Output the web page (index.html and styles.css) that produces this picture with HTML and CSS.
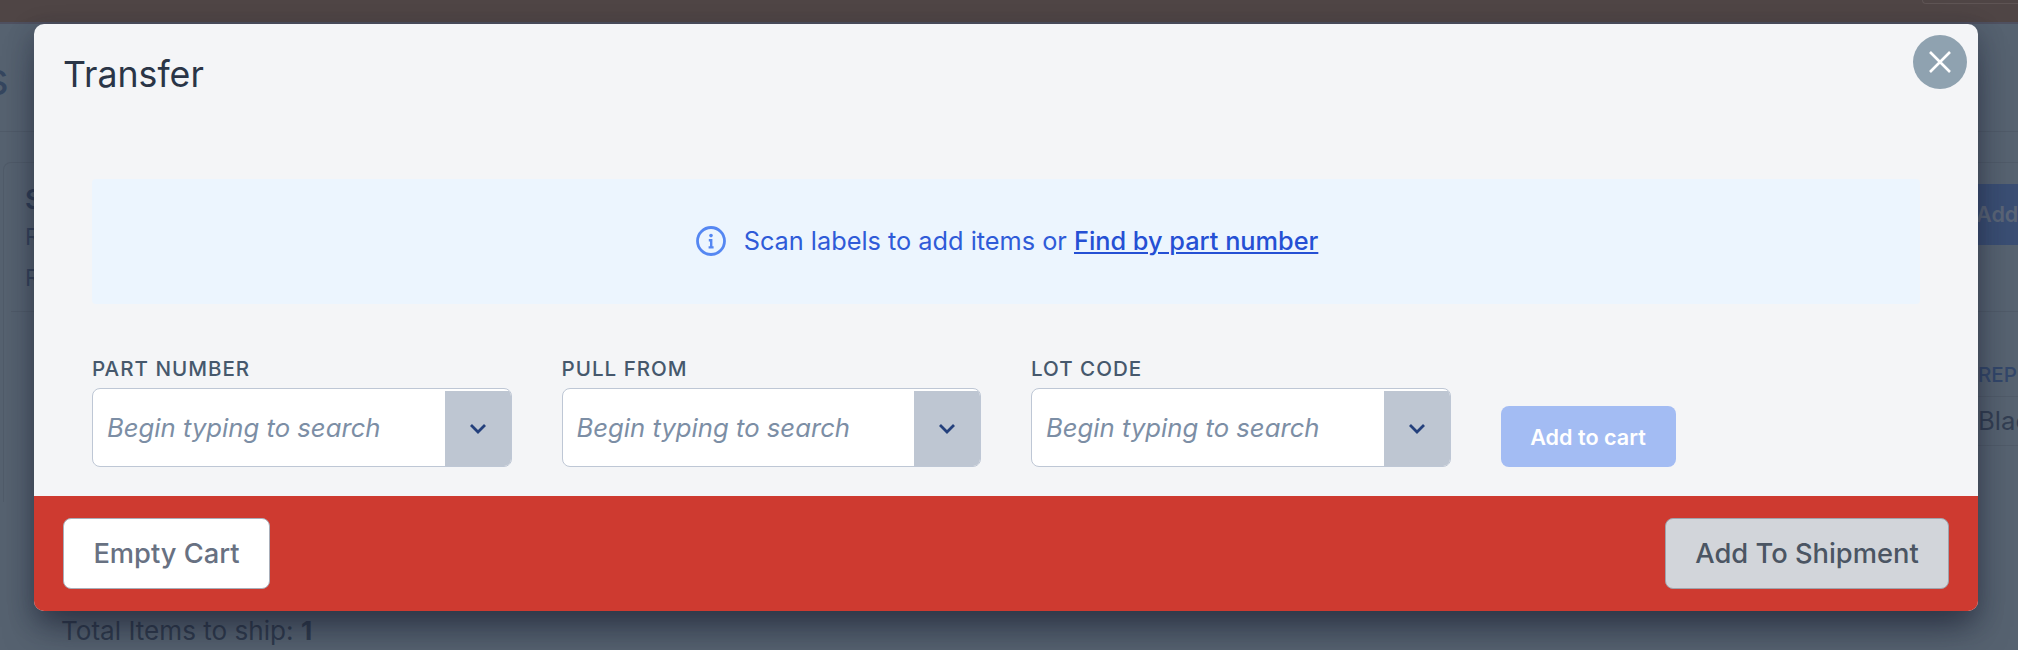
FILE: index.html
```html
<!DOCTYPE html>
<html lang="en">
<head>
<meta charset="utf-8">
<title>Transfer</title>
<link rel="stylesheet" href="styles.css">
</head>
<body>
<div class="page">
  <div class="topbar"><div class="topbar-box"></div></div>
  <div class="under">
    <div class="under-left">
      <div class="under-title">s</div>
      <div class="under-line"></div>
      <div class="under-card">
        <div class="under-rows">
          <div class="under-card-head">S</div>
          <div class="under-card-line">R</div>
          <div class="under-card-line">R</div>
        </div>
        <div class="under-total">Total Items to ship: <b>1</b></div>
      </div>
    </div>
    <div class="under-right">
      <div class="under-line under-line-right"></div>
      <div class="under-line under-line-second"></div>
      <div class="under-add">Add</div>
      <div class="under-line under-line-third"></div>
      <div class="under-th">REP</div>
      <div class="under-td">Black</div>
    </div>
  </div>
</div>
<section class="modal">
  <button class="close" aria-label="Close">
    <svg width="24" height="24" viewBox="0 0 24 24" fill="none" stroke="#fff" stroke-width="2.6"><path d="M2 2l20 20M22 2L2 22"/></svg>
  </button>
  <div class="modal-body">
    <h2 class="modal-title">Transfer</h2>
    <div class="notice">
      <svg class="notice-icon" width="30" height="30" viewBox="0 0 30 30" fill="none"><circle cx="15" cy="15" r="13.5" stroke="#5587f2" stroke-width="2.8"/><circle cx="15" cy="9.6" r="1.8" fill="#5587f2"/><path d="M12.8 14.2h2.4v6.8M12.6 21.4h5" stroke="#5587f2" stroke-width="2.4"/></svg>
      <span>Scan labels to add items or <a href="#">Find by part number</a></span>
    </div>
    <div class="fields">
      <div class="field">
        <label>Part Number</label>
        <div class="combo"><span class="combo-text">Begin typing to search</span><span class="combo-arrow"><svg width="18" height="12" viewBox="0 0 18 12" fill="none" stroke="#24407c" stroke-width="2.8"><path d="M2 2l7 7 7-7"/></svg></span></div>
      </div>
      <div class="field">
        <label>Pull From</label>
        <div class="combo"><span class="combo-text">Begin typing to search</span><span class="combo-arrow"><svg width="18" height="12" viewBox="0 0 18 12" fill="none" stroke="#24407c" stroke-width="2.8"><path d="M2 2l7 7 7-7"/></svg></span></div>
      </div>
      <div class="field">
        <label>Lot Code</label>
        <div class="combo"><span class="combo-text">Begin typing to search</span><span class="combo-arrow"><svg width="18" height="12" viewBox="0 0 18 12" fill="none" stroke="#24407c" stroke-width="2.8"><path d="M2 2l7 7 7-7"/></svg></span></div>
      </div>
      <button class="add-cart">Add to cart</button>
    </div>
  </div>
  <footer class="modal-foot">
    <button class="btn btn-white">Empty Cart</button>
    <button class="btn btn-grey">Add To Shipment</button>
  </footer>
</section>
</body>
</html>
```
FILE: styles.css
```css
* { box-sizing: border-box; }
html, body { margin: 0; height: 100%; }
body { width: 2018px; height: 650px; overflow: hidden; background: #566270; font-family: Inter, "Liberation Sans", sans-serif; color: #2f3a4c; }

.page { display: flex; flex-direction: column; height: 650px; }
.topbar { height: 22px; background: #4f4545; flex: none; display: flex; justify-content: flex-end; }
.topbar-box { width: 96px; height: 4px; border-left: 1px solid #5e5454; border-bottom: 1px solid #5e5454; border-bottom-left-radius: 6px; }
.under { flex: 1; display: flex; justify-content: space-between; border-top: 2px solid #4e5060; }
.under-left { width: 420px; }
.under-title { font-size: 45px; line-height: 50px; color: #35465f; margin-top: 30px; margin-left: -15px; }
.under-line { height: 1px; background: #505b69; }
.under-left .under-line { margin-top: 27px; }
.under-card { margin-top: 30px; margin-left: 3px; width: 400px; height: 340px; border-top: 1px solid #505b69; border-left: 1px solid #505b69; border-top-left-radius: 8px; }
.under-rows { margin-left: 7px; height: 149px; padding-top: 20px; border-bottom: 1px solid #505b69; }
.under-card-head { margin-left: 14px; font-weight: 600; font-size: 27px; line-height: 34px; color: #2f3d55; }
.under-card-line { margin-left: 14px; font-size: 23px; line-height: 41px; color: #35425a; }
.under-total { margin-top: 303px; margin-left: 57px; font-size: 26.1px; line-height: 32px; white-space: nowrap; color: #2f3a4c; }
.under-total b { font-weight: 700; }
.under-right { width: 42px; overflow: hidden; }
.under-line-right { margin-top: 107px; }
.under-line-second { margin-top: 30px; }
.under-add { margin-top: 21px; height: 61px; background: #3a4e73; color: #5a6577; font-weight: 600; font-size: 21.6px; line-height: 61px; white-space: nowrap; }
.under-line-third { margin-top: 66px; }
.under-th { margin-top: 42px; padding-left: 2px; font-size: 20.6px; font-weight: 500; line-height: 42px; color: #33476a; border-bottom: 1px solid #505b69; }
.under-td { padding-left: 2px; font-size: 25.7px; line-height: 48px; color: #323e52; white-space: nowrap; border-bottom: 1px solid #505b69; }

.modal { position: absolute; left: 34px; top: 24px; width: 1944px; height: 587px; background: #f4f5f7; border-radius: 10px; display: flex; flex-direction: column; box-shadow: 0 24px 36px -8px rgba(22,28,46,.5), 0 8px 24px 2px rgba(22,28,46,.3); }
.close { position: absolute; right: 11px; top: 11px; width: 54px; height: 54px; border: 0; border-radius: 50%; padding: 0; background: #8fa2b0; display: flex; align-items: center; justify-content: center; }
.modal-body { flex: 1; padding: 27px 58px 0; }
.modal-title { margin: 0 0 0 -29px; font-size: 35.7px; line-height: 46px; font-weight: 400; color: #2a3547; }
.notice { margin-top: 82px; height: 125px; padding: 0 0 2px 2px; border-radius: 4px; background: #ecf5fe; display: flex; align-items: center; justify-content: center; gap: 18px; font-size: 25.3px; line-height: 32px; color: #2f5bd8; }
.notice-icon { flex: none; }
.notice a { color: #2550d4; font-weight: 500; text-decoration: underline; }
.fields { display: grid; grid-template-columns: 419.5px 419.5px 419.5px 175px; column-gap: 50px; margin-top: 51px; align-items: end; }
.field label { display: block; font-size: 20.57px; line-height: 28px; font-weight: 500; letter-spacing: 1px; text-transform: uppercase; color: #46586c; margin-bottom: 5px; }
.combo { height: 79px; display: flex; border: 1.5px solid #bec7d5; border-radius: 8px; background: #fff; overflow: hidden; }
.combo-text { flex: 1; padding-left: 14px; align-self: center; font-size: 25.7px; font-style: italic; color: #7c8ea5; white-space: nowrap; }
.combo-arrow { width: 66px; margin-top: 2px; background: #bec6d2; display: flex; align-items: center; justify-content: center; }
.add-cart { height: 61px; border: 0; border-radius: 8px; background: #a3bcf3; color: #fff; font: 600 21.6px Inter, "Liberation Sans", sans-serif; padding: 0; }
.modal-foot { flex: none; height: 115px; background: #ce3a30; border-radius: 0 0 10px 10px; display: flex; align-items: center; justify-content: space-between; padding: 0 29px; }
.btn { height: 71px; border-radius: 8px; font: 500 27.3px Inter, "Liberation Sans", sans-serif; padding: 0; }
.btn-white { width: 207px; background: #fff; border: 1.5px solid #a8aeb9; color: #687182; }
.btn-grey { width: 284px; background: #d2d5da; border: 1.5px solid #9ea4ad; color: #4b5563; }
```
